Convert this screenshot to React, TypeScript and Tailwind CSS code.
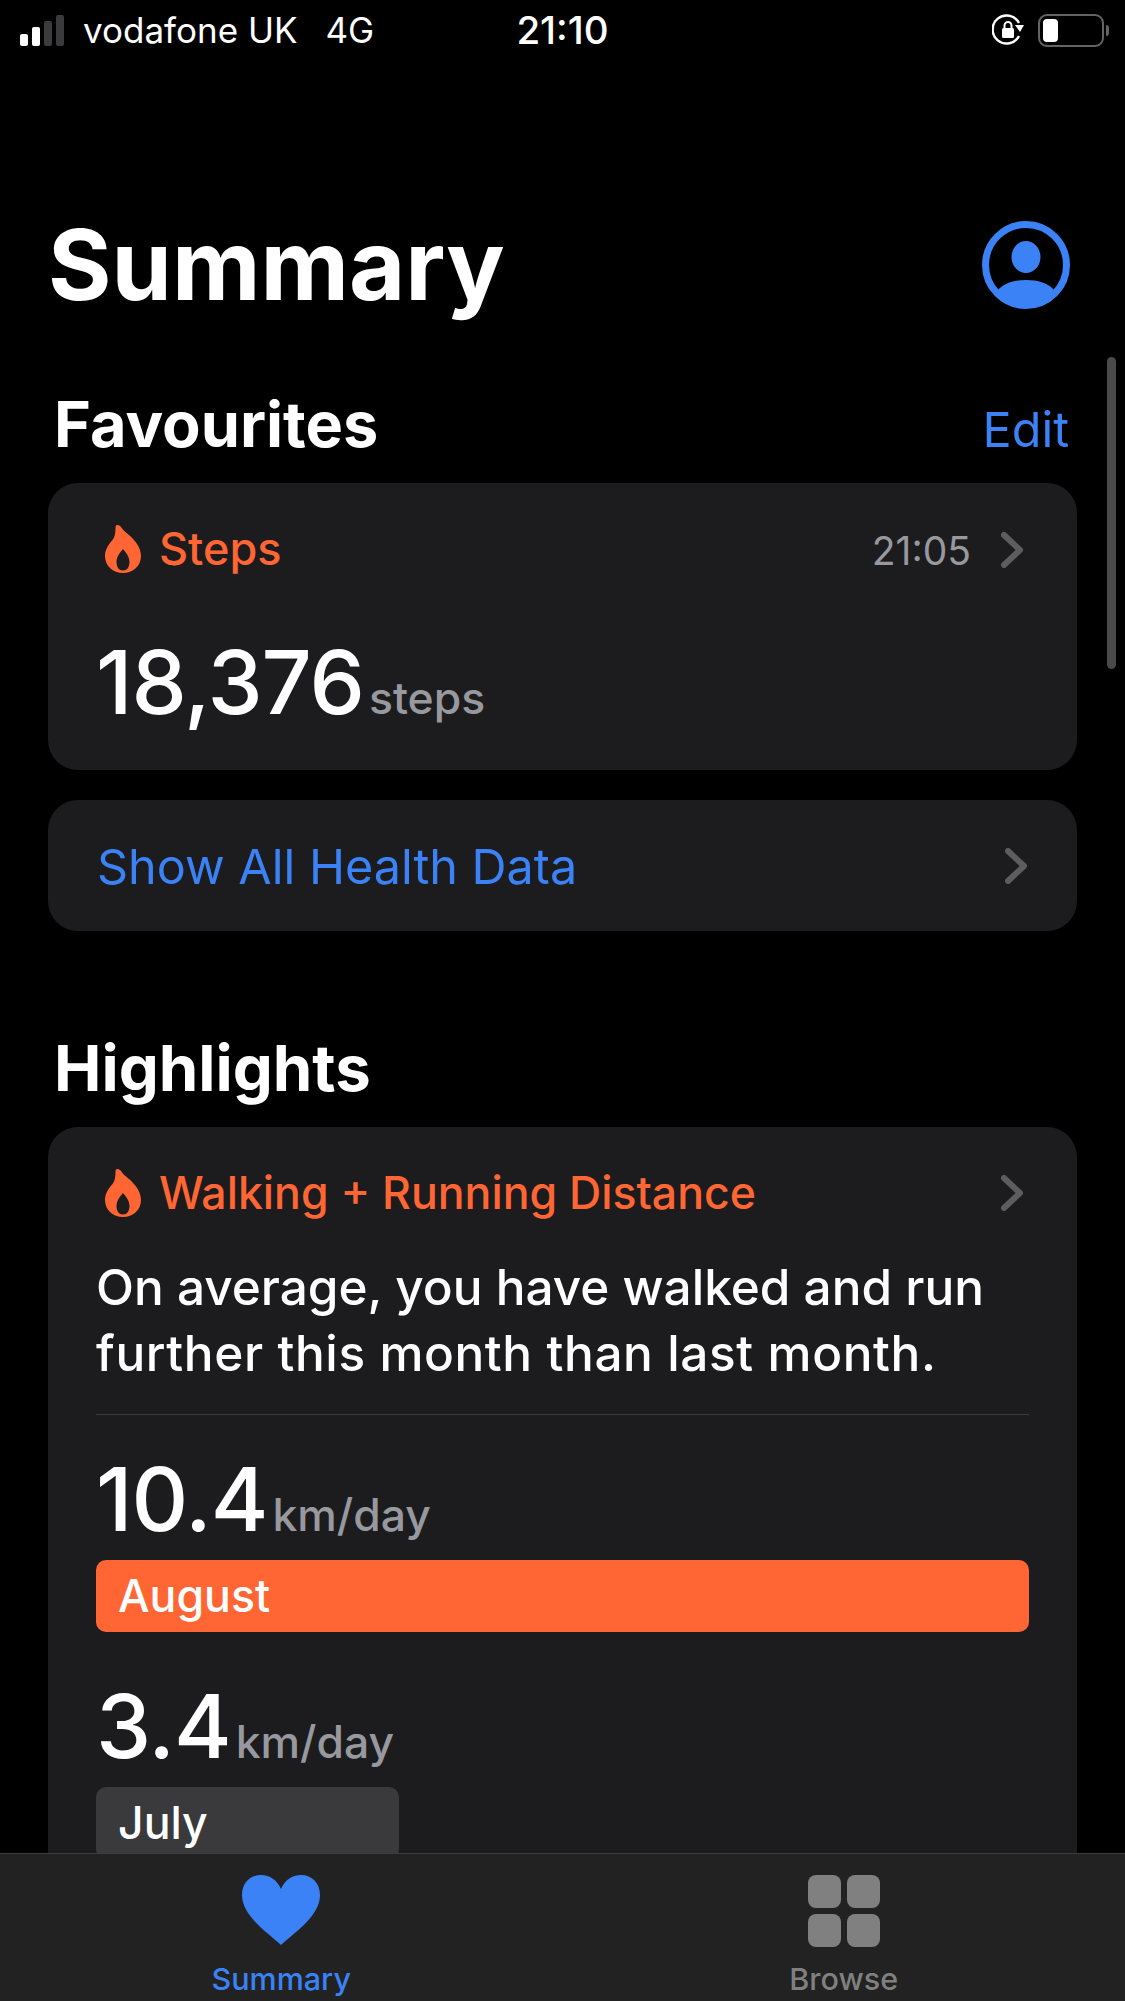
const font = "font-['Inter','Liberation_Sans',sans-serif]";

function Flame() {
  return (
    <svg width="36" height="48" viewBox="0 0 36 48" className="shrink-0">
      <path
        fillRule="evenodd"
        fill="#ff6633"
        d="M12 0C15 0 16 2 17.500 4C21 8.500 36 17 36 31C36 41 28 48 18 48C8 48 0 41 0 31C0 24 4 19 7.500 15C10 12 10.500 7 10.500 3C10.500 1 11 0 12 0ZM18 24C15.500 27 11.500 31.500 11.500 37C11.500 42 14 45.500 18 45.500C22 45.500 24.500 42 24.500 37C24.500 31.500 20.500 27 18 24Z"
      />
    </svg>
  );
}

function Chevron() {
  return (
    <svg width="22" height="36" viewBox="0 0 22 36" className="shrink-0">
      <path d="M3 3L19 18L3 33" fill="none" stroke="#5d5d61" strokeWidth="6" strokeLinecap="round" strokeLinejoin="round" />
    </svg>
  );
}

function StatusBar() {
  return (
    <div className="flex h-[60px] shrink-0 items-center justify-between pl-[20px] pr-[16px] text-white">
      <div className="flex w-[358px] items-center">
        <div className="flex items-end gap-[4px]">
          <div className="h-[12px] w-[8px] rounded-[2px] bg-white" />
          <div className="h-[19px] w-[8px] rounded-[2px] bg-white" />
          <div className="h-[25px] w-[8px] rounded-[2px] bg-[#3a3a3c]" />
          <div className="h-[31px] w-[8px] rounded-[2px] bg-[#3a3a3c]" />
        </div>
        <span className="ml-[19px] text-[35px] leading-none whitespace-nowrap">vodafone UK</span>
        <span className="ml-[28px] text-[35px] leading-none">4G</span>
      </div>
      <span className="text-[38.5px] font-medium leading-none">21:10</span>
      <div className="flex w-[362px] items-center justify-end gap-[14px]">
        <svg width="32" height="32" viewBox="0 0 32 32">
          <path d="M27 22A14 14 0 1 1 27 9" fill="none" stroke="white" strokeWidth="2.500" />
          <path d="M23 11L32 11L28 18Z" fill="white" />
          <rect x="10" y="14" width="12" height="10" rx="1.500" fill="white" />
          <path d="M12.500 14V11.500A3.500 3.500 0 0 1 19.500 11.500V14" fill="none" stroke="white" strokeWidth="2" />
        </svg>
        <div className="flex items-center">
          <div className="flex h-[33px] w-[66px] items-center rounded-[9px] border-[2.5px] border-[#636366] px-[3px]">
            <div className="h-[23px] w-[15px] rounded-[4px] bg-white" />
          </div>
          <div className="ml-[2px] h-[11px] w-[3px] rounded-r-[3px] bg-[#636366]" />
        </div>
      </div>
    </div>
  );
}

function Metric({ value, unit }: { value: string; unit: string }) {
  return (
    <div className="flex items-baseline gap-[5px]">
      <span className="text-[88px] font-medium leading-none tracking-[-1px] text-white">{value}</span>
      <span className="text-[44.5px] font-medium leading-none text-[#98989f]">{unit}</span>
    </div>
  );
}

export default function App() {
  return (
    <div className={"relative flex h-[2001px] w-[1125px] flex-col overflow-hidden bg-black " + font}>
      <StatusBar />

      <main className="flex-1 overflow-hidden px-[48px]">
        <div className="mt-[150px] flex items-center justify-between pr-[7px]">
          <h1 className="text-[97px] font-bold leading-[110px] text-white">Summary</h1>
          <svg width="88" height="88" viewBox="0 0 88 88">
            <circle cx="44" cy="44" r="40.500" fill="none" stroke="#3b82f6" strokeWidth="7" />
            <ellipse cx="44" cy="36" rx="14.500" ry="16" fill="#3b82f6" />
            <path d="M16 69C22 62 32 59 44 59C56 59 66 62 72 69C65 78 55 84 44 84C33 84 23 78 16 69Z" fill="#3b82f6" />
          </svg>
        </div>

        <div className="mt-[67px] flex items-end justify-between pl-[6px] pr-[8px]">
          <h2 className="text-[63px] font-bold leading-[74px] text-white">Favourites</h2>
          <span className="text-[48.5px] leading-[62px] text-[#3b82f6]">Edit</span>
        </div>

        <section className="mt-[22px] h-[287px] rounded-[30px] bg-[#1c1c1e] pl-[48px] pr-[54px] pt-[40px]">
          <div className="flex items-center justify-between">
            <div className="flex items-center gap-[18px] pl-[9px]">
              <Flame />
              <span className="text-[45px] font-medium leading-[52px] text-[#ff6633]">Steps</span>
            </div>
            <div className="flex items-center gap-[30px] pt-[2px]">
              <span className="text-[39px] leading-none text-[#98989f]">21:05</span>
              <Chevron />
            </div>
          </div>
          <div className="mt-[63px]">
            <Metric value="18,376" unit="steps" />
          </div>
        </section>

        <section className="mt-[30px] flex h-[131px] items-center justify-between rounded-[30px] bg-[#1c1c1e] pl-[49px] pr-[50px]">
          <span className="pt-[3px] text-[48.5px] leading-none text-[#3b82f6]">Show All Health Data</span>
          <Chevron />
        </section>

        <h2 className="mt-[100px] pl-[6px] text-[63.5px] font-bold leading-[74px] text-white">Highlights</h2>

        <section className="mt-[22px] h-[800px] rounded-[30px] bg-[#1c1c1e] px-[48px] pt-[40px]">
          <div className="flex items-center justify-between">
            <div className="flex items-center gap-[18px] pl-[9px]">
              <Flame />
              <span className="text-[44.6px] font-medium leading-[52px] text-[#ff6633]">Walking + Running Distance</span>
            </div>
            <div className="mr-[6px]">
              <Chevron />
            </div>
          </div>
          <p className="mt-[35px] border-b border-[#3a3a3c] pb-[28px] text-[49.5px] font-medium leading-[66px] text-white">
            <span className="block whitespace-nowrap">On average, you have walked and run</span>
            <span className="block whitespace-nowrap tracking-[0.6px]">further this month than last month.</span>
          </p>
          <div className="mt-[40px]">
            <Metric value="10.4" unit="km/day" />
          </div>
          <div className="mt-[17px] flex h-[72px] items-center rounded-[10px] bg-[#ff6633] px-[22px] text-[44.6px] font-medium text-white">
            August
          </div>
          <div className="mt-[50px]">
            <Metric value="3.4" unit="km/day" />
          </div>
          <div className="mt-[17px] flex h-[72px] w-[303px] items-center rounded-[10px] bg-[#3a3a3c] px-[22px] text-[44.6px] font-medium text-white">
            July
          </div>
        </section>
      </main>

      <nav className="grid h-[148px] shrink-0 grid-cols-2 border-t border-[#3d3d3f] bg-[#222222]">
        <div className="flex flex-col items-center pt-[21px]">
          <svg width="78" height="70" viewBox="0 0 78 70">
            <path d="M39 70C26 58 0 41 0 20C0 8 8 0 19 0C28 0 35 5 39 14C43 5 50 0 59 0C70 0 78 8 78 20C78 41 52 58 39 70Z" fill="#3b82f6" />
          </svg>
          <span className="mt-[15px] text-[30.5px] font-medium leading-[38px] text-[#3b82f6]">Summary</span>
        </div>
        <div className="flex flex-col items-center pt-[21px]">
          <div className="grid grid-cols-2 gap-[6px]">
            <div className="h-[33px] w-[33px] rounded-[8px] bg-[#808080]" />
            <div className="h-[33px] w-[33px] rounded-[8px] bg-[#808080]" />
            <div className="h-[33px] w-[33px] rounded-[8px] bg-[#808080]" />
            <div className="h-[33px] w-[33px] rounded-[8px] bg-[#808080]" />
          </div>
          <span className="mt-[13px] text-[30.5px] font-medium leading-[38px] text-[#808080]">Browse</span>
        </div>
      </nav>

      {/* scroll indicator sits over the page */}
      <div className="absolute left-[1107px] top-[357px] h-[312px] w-[9px] rounded-full bg-[#4a4a4a]" />
    </div>
  );
}
